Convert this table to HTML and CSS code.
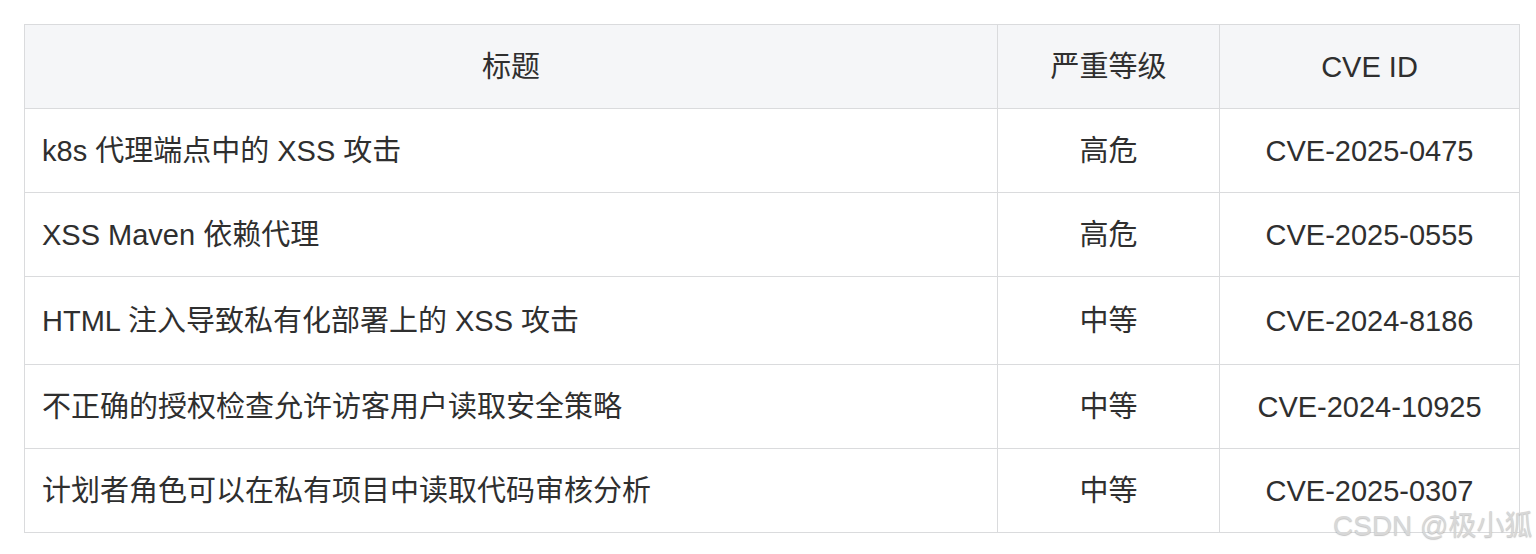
FILE: index.html
```html
<!DOCTYPE html>
<html lang="zh-CN">
<head>
<meta charset="utf-8">
<title>CVE 列表</title>
<link rel="stylesheet" href="styles.css">
</head>
<body>
<div class="page">
  <table class="cve-table">
    <colgroup>
      <col class="col-title">
      <col class="col-level">
      <col class="col-id">
    </colgroup>
    <thead>
      <tr>
        <th>标题</th>
        <th>严重等级</th>
        <th>CVE ID</th>
      </tr>
    </thead>
    <tbody>
      <tr>
        <td class="title">k8s 代理端点中的 XSS 攻击</td>
        <td>高危</td>
        <td>CVE-2025-0475</td>
      </tr>
      <tr>
        <td class="title">XSS Maven 依赖代理</td>
        <td>高危</td>
        <td>CVE-2025-0555</td>
      </tr>
      <tr class="tall">
        <td class="title">HTML 注入导致私有化部署上的 XSS 攻击</td>
        <td>中等</td>
        <td>CVE-2024-8186</td>
      </tr>
      <tr>
        <td class="title">不正确的授权检查允许访客用户读取安全策略</td>
        <td>中等</td>
        <td>CVE-2024-10925</td>
      </tr>
      <tr>
        <td class="title">计划者角色可以在私有项目中读取代码审核分析</td>
        <td>中等</td>
        <td>CVE-2025-0307</td>
      </tr>
    </tbody>
  </table>
  <div class="watermark">CSDN @极小狐</div>
</div>
</body>
</html>
```

FILE: styles.css
```css
html, body {
  margin: 0;
  padding: 0;
  background: #ffffff;
}

body {
  font-family: "Liberation Sans", "Noto Sans CJK SC", sans-serif;
  color: #2f2f2f;
}

.page {
  position: relative;
  width: 1536px;
  height: 554px;
  padding: 24px 0 0 24px;
  box-sizing: border-box;
}

.cve-table {
  border-collapse: collapse;
  table-layout: fixed;
  width: 1495px;
  font-size: 29px;
}

.col-title { width: 973px; }
.col-level { width: 222px; }
.col-id { width: 300px; }

.cve-table th,
.cve-table td {
  border: 1px solid #dadbdd;
  height: 84px;
  padding: 0 16px;
  box-sizing: border-box;
  text-align: center;
  vertical-align: middle;
  font-weight: normal;
  line-height: 40px;
  white-space: nowrap;
}

.cve-table thead th {
  background: #f5f6f8;
  height: 84px;
}

.cve-table td.title {
  text-align: left;
  padding-left: 17px;
}

.cve-table tr.tall td {
  height: 88px;
}

.watermark {
  position: absolute;
  left: 1333px;
  top: 508px;
  font-size: 28px;
  line-height: 36px;
  color: #d8d8d8;
  text-shadow: 0 1px 1px rgba(110, 110, 110, 0.4);
  white-space: nowrap;
}
```
